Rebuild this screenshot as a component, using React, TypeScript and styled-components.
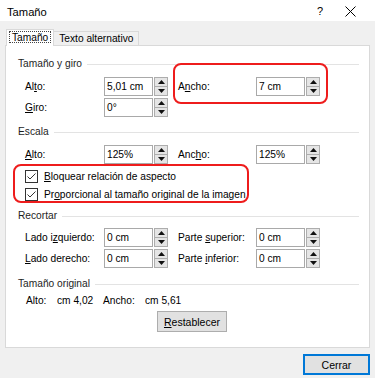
import React from 'react';
import styled, { createGlobalStyle } from 'styled-components';

const Global = createGlobalStyle`
  html, body { margin: 0; padding: 0; }
  body {
    font-family: "Liberation Sans", Arial, sans-serif;
    font-size: 10.2px;
    color: #000;
    background: #f0f0f0;
  }
  * { box-sizing: border-box; }
`;

const Window = styled.div`
  position: relative;
  width: 375px;
  height: 378px;
  background: #f0f0f0;
  display: flex;
  flex-direction: column;
  overflow: hidden;
`;

const TitleBar = styled.div`
  height: 21px;
  background: #fff;
  display: flex;
  align-items: center;
  padding-left: 7px;
  padding-right: 10px;
`;

const Title = styled.div`
  flex: 1;
  font-size: 11.2px;
  padding-top: 2px;
`;

const CaptionButton = styled.div<{ $w: number }>`
  width: ${(p) => p.$w}px;
  height: 21px;
  display: flex;
  align-items: center;
  justify-content: center;
  font-size: 11px;
  padding-top: 1px;
`;

const Body = styled.div`
  flex: 1;
  display: flex;
  flex-direction: column;
  padding: 8px 5px 0 5px;
`;

const TabStrip = styled.div`
  display: flex;
  align-items: flex-end;
  height: 16px;
  padding-left: 1px;
  position: relative;
  z-index: 1;
`;

const ActiveTab = styled.div`
  height: 17px;
  margin-bottom: -1px;
  background: #fff;
  border: 1px solid #d9d9d9;
  border-bottom: none;
  padding: 1px 2px 3px;
  display: flex;
`;

const FocusText = styled.span`
  border: 1px dotted #444;
  padding: 0 2px;
  line-height: 11px;
`;

const Tab = styled.div`
  height: 14px;
  background: #f0f0f0;
  border: 1px solid #d9d9d9;
  border-left: none;
  border-bottom: none;
  padding: 0 5px;
  line-height: 13px;
`;

const Panel = styled.div`
  height: 303px;
  background: #fff;
  border: 1px solid #d9d9d9;
  padding: 10px 10px 0 12px;
  display: flex;
  flex-direction: column;
`;

const Heading = styled.div<{ $mt: number }>`
  margin-top: ${(p) => p.$mt}px;
  height: 14px;
  display: flex;
  align-items: center;
  color: #1e1e1e;
  &::after {
    content: "";
    flex: 1;
    height: 1px;
    background: #e3e3e3;
    margin-left: 5px;
    margin-top: 2px;
  }
`;

const Rows = styled.div<{ $mt: number; $gap: number }>`
  margin-top: ${(p) => p.$mt}px;
  margin-left: 7px;
  display: flex;
  flex-direction: column;
  gap: ${(p) => p.$gap}px;
`;

const FieldRow = styled.div<{ $h: number }>`
  height: ${(p) => p.$h}px;
  display: flex;
  align-items: stretch;
`;

const Label = styled.div<{ $w: number; $ml?: number }>`
  width: ${(p) => p.$w}px;
  margin-left: ${(p) => p.$ml ?? 0}px;
  display: flex;
  align-items: center;
  white-space: nowrap;
`;

const Key = styled.span`
  text-decoration: underline;
  text-underline-offset: 1px;
`;

const TextBox = styled.div`
  width: 49px;
  background: #fff;
  border: 1px solid #a9a9a9;
  padding-left: 2px;
  display: flex;
  align-items: center;
`;

const Spinner = styled.div`
  width: 14px;
  margin-left: 1px;
  display: flex;
  flex-direction: column;
  border: 1px solid #adadad;
  background: #e5e5e5;
`;

const SpinHalf = styled.div`
  flex: 1;
  display: flex;
  align-items: center;
  justify-content: center;
  & + & { border-top: 1px solid #adadad; }
`;

const CheckRow = styled.div`
  height: 18px;
  display: flex;
  align-items: center;
  gap: 6px;
`;

const CheckBox = styled.div`
  width: 13px;
  height: 13px;
  border: 1px solid #333;
  background: #fff;
  display: flex;
  align-items: center;
  justify-content: center;
`;

const InfoRow = styled.div`
  margin-top: 3px;
  margin-left: 8px;
  height: 14px;
  display: flex;
  align-items: center;
`;

const InfoCell = styled.span<{ $w: number }>`
  width: ${(p) => p.$w}px;
  white-space: nowrap;
`;

const ButtonRow = styled.div`
  margin-top: 4px;
  padding-left: 139px;
  display: flex;
`;

const Button = styled.div<{ $w: number; $default?: boolean }>`
  width: ${(p) => p.$w}px;
  height: 21px;
  background: #e1e1e1;
  border: ${(p) => (p.$default ? '2px solid #0078d7' : '1px solid #adadad')};
  display: flex;
  align-items: center;
  justify-content: center;
  font-size: 10.5px;
`;

const Footer = styled.div`
  margin-top: 6px;
  display: flex;
  justify-content: flex-end;
`;

const Highlight = styled.div<{ $x: number; $y: number; $w: number; $h: number }>`
  position: absolute;
  left: ${(p) => p.$x}px;
  top: ${(p) => p.$y}px;
  width: ${(p) => p.$w}px;
  height: ${(p) => p.$h}px;
  border: 2px solid #ee1c1c;
  border-radius: 8px;
  pointer-events: none;
`;

const Arrow = ({ up }: { up?: boolean }) => (
  <svg width="7" height="4" viewBox="0 0 7 4">
    {up ? <polygon points="0,4 7,4 3.5,0" fill="#111" /> : <polygon points="0,0 7,0 3.5,4" fill="#111" />}
  </svg>
);

const SpinField = ({ value }: { value: string }) => (
  <>
    <TextBox>{value}</TextBox>
    <Spinner>
      <SpinHalf>
        <Arrow up />
      </SpinHalf>
      <SpinHalf>
        <Arrow />
      </SpinHalf>
    </Spinner>
  </>
);

const Check = () => (
  <CheckBox>
    <svg width="11" height="11" viewBox="0 0 11 11">
      <path d="M1.5 5.5 L4 8 L9.5 2.5" fill="none" stroke="#333" strokeWidth="1" />
    </svg>
  </CheckBox>
);

export default function App() {
  return (
    <Window>
      <Global />
      <TitleBar>
        <Title>Tamaño</Title>
        <CaptionButton $w={30}>?</CaptionButton>
        <CaptionButton $w={30}>
          <svg width="11" height="11" viewBox="0 0 11 11">
            <path d="M0.5 0.5 L10.5 10.5 M10.5 0.5 L0.5 10.5" stroke="#000" strokeWidth="1" />
          </svg>
        </CaptionButton>
      </TitleBar>
      <Body>
        <TabStrip>
          <ActiveTab>
            <FocusText>Tamaño</FocusText>
          </ActiveTab>
          <Tab>Texto alternativo</Tab>
        </TabStrip>
        <Panel>
          <Heading $mt={0}>Tamaño y giro</Heading>
          <Rows $mt={7} $gap={2}>
            <FieldRow $h={19}>
              <Label $w={79}>
                <span>
                  Al<Key>t</Key>o:
                </span>
              </Label>
              <SpinField value="5,01 cm" />
              <Label $w={78} $ml={10}>
                <span>
                  A<Key>n</Key>cho:
                </span>
              </Label>
              <SpinField value="7 cm" />
            </FieldRow>
            <FieldRow $h={19}>
              <Label $w={79}>
                <span>
                  <Key>G</Key>iro:
                </span>
              </Label>
              <SpinField value="0°" />
            </FieldRow>
          </Rows>
          <Heading $mt={7}>Escala</Heading>
          <Rows $mt={7} $gap={2}>
            <FieldRow $h={19}>
              <Label $w={79}>
                <span>
                  <Key>A</Key>lto:
                </span>
              </Label>
              <SpinField value="125%" />
              <Label $w={78} $ml={10}>
                <span>
                  Anc<Key>h</Key>o:
                </span>
              </Label>
              <SpinField value="125%" />
            </FieldRow>
          </Rows>
          <Rows $mt={3} $gap={0}>
            <CheckRow>
              <Check />
              <span>
                <Key>B</Key>loquear relación de aspecto
              </span>
            </CheckRow>
            <CheckRow>
              <Check />
              <span>
                Pr<Key>o</Key>porcional al tamaño original de la imagen
              </span>
            </CheckRow>
          </Rows>
          <Heading $mt={5}>Recortar</Heading>
          <Rows $mt={6} $gap={2}>
            <FieldRow $h={19}>
              <Label $w={79}>
                <span>
                  Lado i<Key>z</Key>quierdo:
                </span>
              </Label>
              <SpinField value="0 cm" />
              <Label $w={78} $ml={10}>
                <span>
                  Parte <Key>s</Key>uperior:
                </span>
              </Label>
              <SpinField value="0 cm" />
            </FieldRow>
            <FieldRow $h={19}>
              <Label $w={79}>
                <span>
                  <Key>L</Key>ado derecho:
                </span>
              </Label>
              <SpinField value="0 cm" />
              <Label $w={78} $ml={10}>
                <span>
                  Parte <Key>i</Key>nferior:
                </span>
              </Label>
              <SpinField value="0 cm" />
            </FieldRow>
          </Rows>
          <Heading $mt={8}>Tamaño original</Heading>
          <InfoRow>
            <InfoCell $w={31}>Alto:</InfoCell>
            <InfoCell $w={46}>cm 4,02</InfoCell>
            <InfoCell $w={42}>Ancho:</InfoCell>
            <InfoCell $w={50}>cm 5,61</InfoCell>
          </InfoRow>
          <ButtonRow>
            <Button $w={70}>
              <span>
                <Key>R</Key>establecer
              </span>
            </Button>
          </ButtonRow>
        </Panel>
        <Footer>
          <Button $w={67} $default>
            Cerrar
          </Button>
        </Footer>
      </Body>
      <Highlight $x={173} $y={63} $w={155} $h={41} />
      <Highlight $x={13} $y={164} $w={236} $h={39} />
    </Window>
  );
}
